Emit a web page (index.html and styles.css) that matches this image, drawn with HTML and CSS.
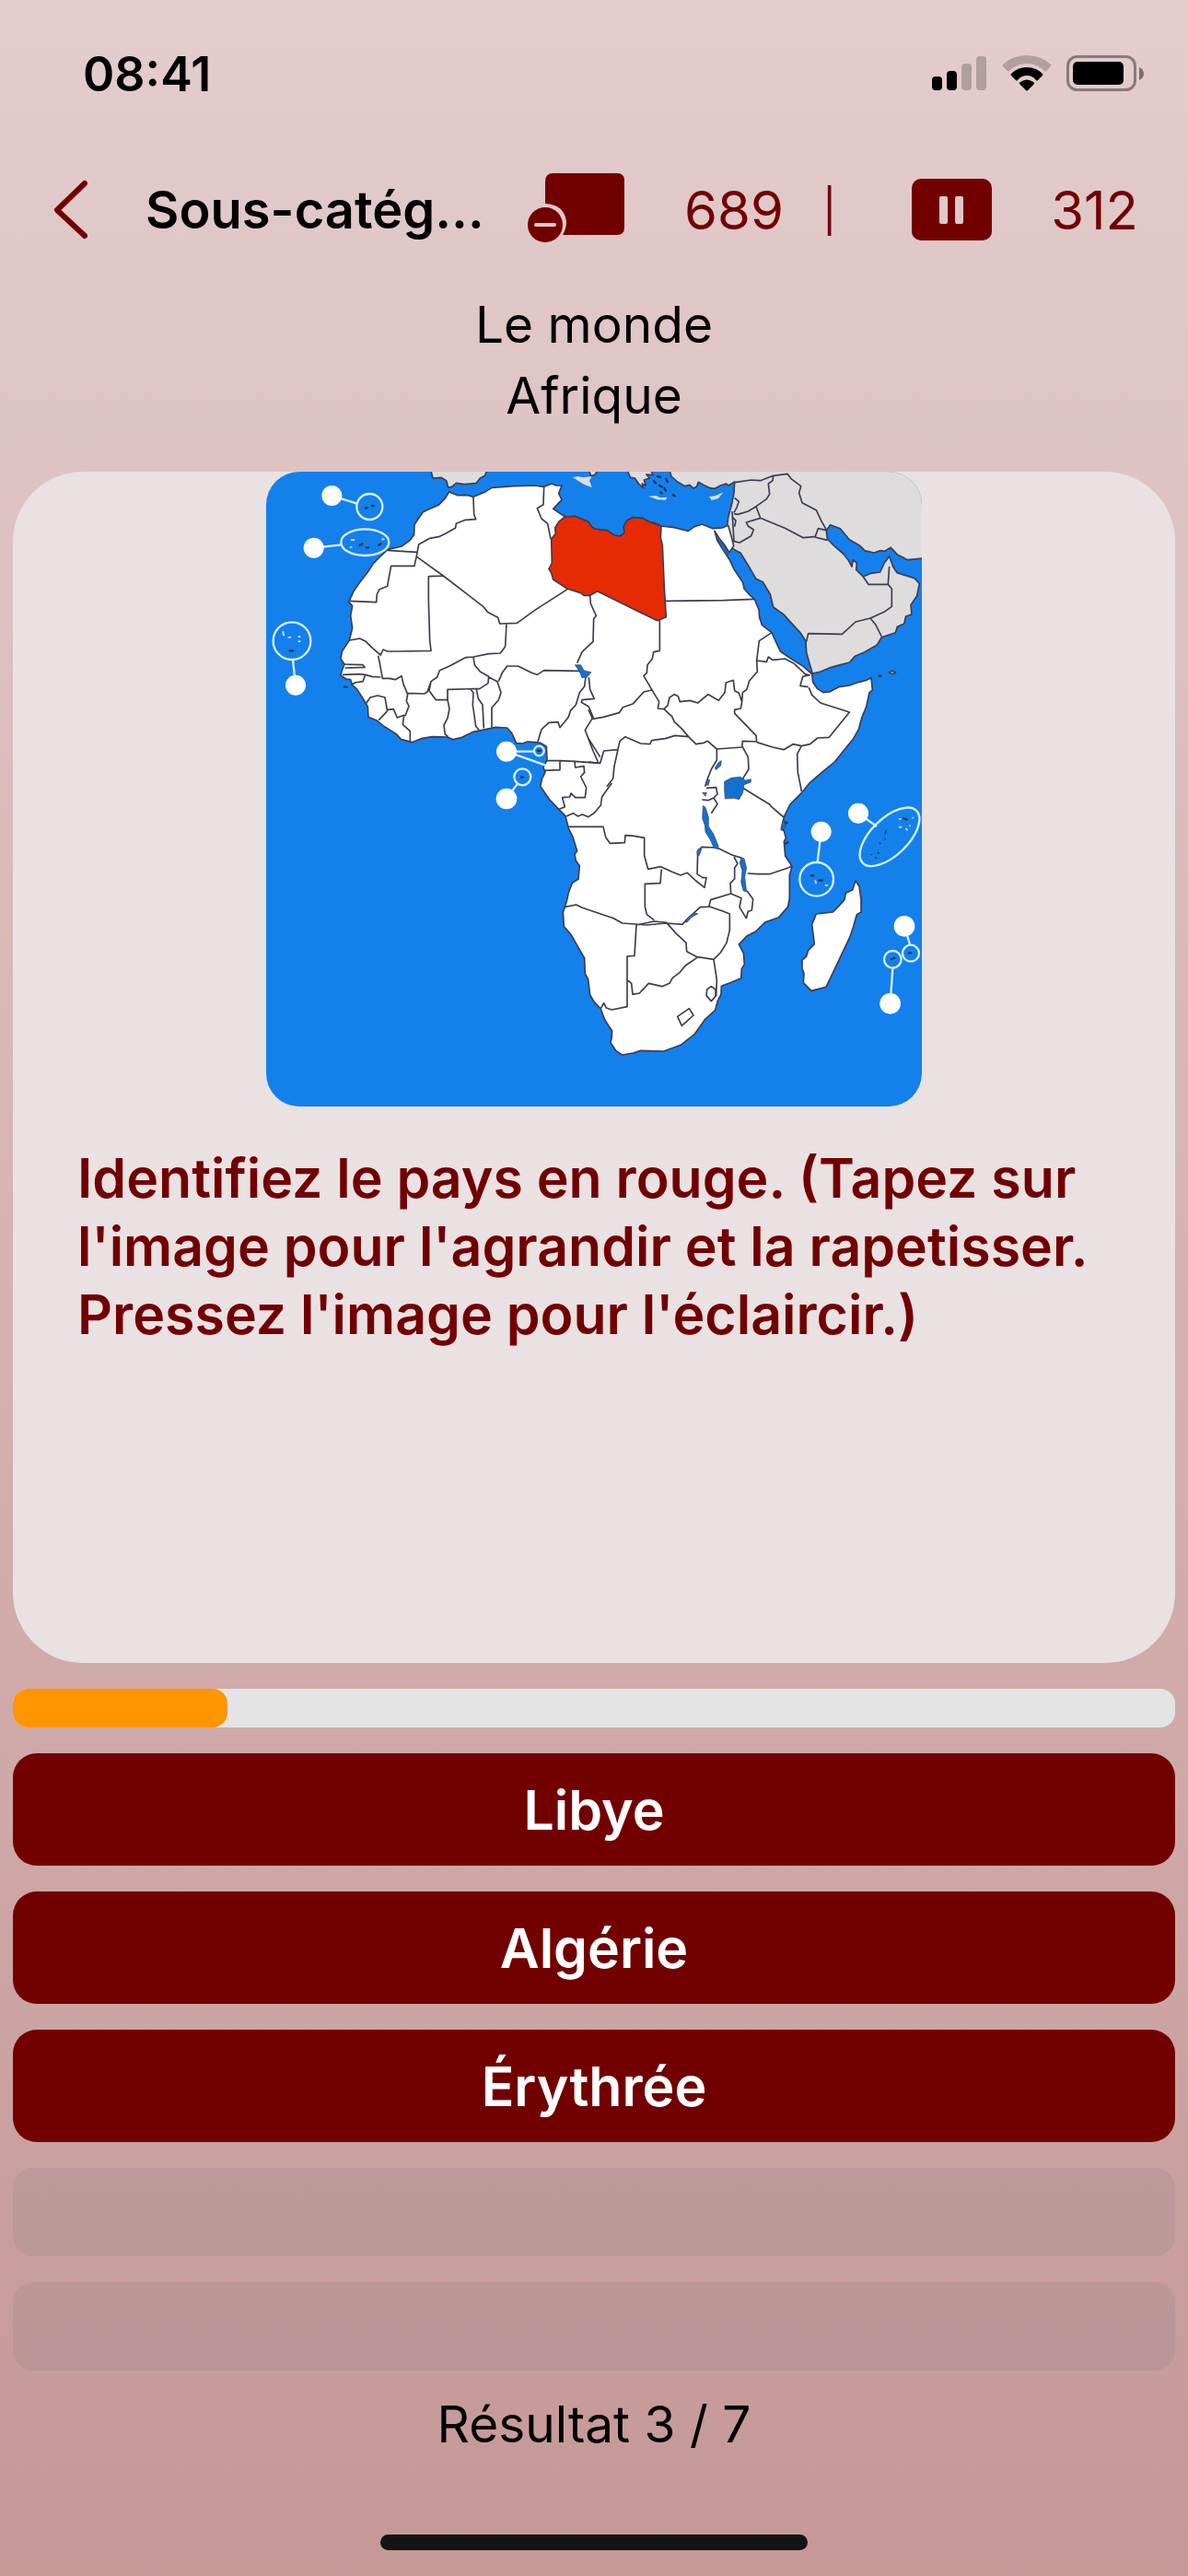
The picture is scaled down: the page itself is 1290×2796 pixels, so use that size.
FILE: index.html
```html
<!DOCTYPE html>
<html lang="fr">

<head>
    <meta charset="UTF-8">
    <meta name="viewport" content="width=device-width, initial-scale=1.0">
    <title>Quiz - Afrique</title>
    <link rel="stylesheet" href="styles.css">
</head>

<body>
    <div class="status-bar">
        <span class="time">08:41</span>
        <div class="status-icons">
            <svg width="60" height="40" viewBox="0 0 60 40">
                <rect x="0" y="23" width="11" height="15" rx="4"/>
                <rect x="16" y="17" width="11" height="21" rx="4"/>
                <rect class="dim" x="32" y="9" width="11" height="29" rx="4"/>
                <rect class="dim" x="48" y="1" width="11" height="37" rx="4"/>
            </svg>
            <svg width="54" height="40" viewBox="0 0 54 40">
                <path class="dim" d="M1 12Q0 11 1 10Q12 0 27 0Q42 0 53 10Q54 11 53 12L48 17Q47 18 46 17Q38 9 27 9Q16 9 8 17Q7 18 6 17Z"/>
                <path d="M10 22Q9 21 10 20Q17 13 27 13Q37 13 44 20Q45 21 44 22L39 27Q38 28 37 27Q33 22 27 22Q21 22 17 27Q16 28 15 27Z"/>
                <path d="M19 31Q18 30 20 29Q27 24 34 29Q36 30 35 31L28 38Q27 39 26 38Z"/>
            </svg>
            <svg width="84" height="40" viewBox="0 0 84 40">
                <rect class="battery-frame" x="1.5" y="1.5" width="73" height="36" rx="10"/>
                <rect x="7" y="7" width="55" height="25" rx="5"/>
                <path class="battery-tip" d="M79 13Q84 15 84 20Q84 25 79 27Z"/>
            </svg>
        </div>
    </div>

    <header class="nav-bar">
        <button class="icon-btn back-btn" aria-label="Retour">
            <svg width="40" height="66" viewBox="0 0 40 66"><path class="chevron" d="M34 4L4 33L34 61"/></svg>
        </button>
        <h1>Sous-catég…</h1>
        <button class="icon-btn remove-btn" aria-label="Retirer">
            <svg width="106" height="82" viewBox="0 0 106 82">
                <path class="fill" d="M28 1H97Q105 1 105 9V60Q105 68 97 68H38Q42 61 42 54Q40 35 19 34V10Q19 1 28 1Z"/>
                <circle class="fill" cx="19" cy="57" r="19"/>
                <path class="minus" d="M9 57H29"/>
            </svg>
        </button>
        <span class="counter">689</span>
        <span class="divider">|</span>
        <button class="icon-btn pause-btn" aria-label="Pause">
            <svg width="87" height="68" viewBox="0 0 87 68">
                <rect class="fill" width="87" height="67" rx="10"/>
                <rect class="pause-bar" x="30" y="19" width="9" height="30" rx="2"/>
                <rect class="pause-bar" x="47" y="19" width="9" height="30" rx="2"/>
            </svg>
        </button>
        <span class="counter score">312</span>
    </header>

    <div class="category">
        <div>Le monde</div>
        <div>Afrique</div>
    </div>

    <main class="quiz">
        <section class="question-card">
            <svg class="map" viewBox="15 21 2136 2067" role="img" aria-label="Carte de l'Afrique">
                <rect class="sea" x="15" y="21" width="2136" height="2067"/>

                <!-- Europe -->
                <path class="abroad" d="M550 10L558 42L586 40L602 50L608 72L620 70L634 58L660 62L700 58L712 42L728 34L736 10Z"/>
                <path class="abroad no-line" d="M1014 40L1030 36L1048 40L1076 36L1068 50L1076 72L1050 62Z"/>
                <path class="abroad" d="M1066 10H1100L1085 32L1072 34ZM1188 10L1202 40L1216 42L1230 62L1244 74L1240 60L1252 66L1246 48L1264 42L1254 30L1276 32L1264 10Z"/>
                <path class="abroad no-line" d="M1260 101L1284 99L1300 106L1322 104L1316 113L1290 112ZM1458 102L1478 100L1504 88L1488 108L1466 114Z"/>
                <path class="specks" d="M1278 52l6 6M1296 66l8 4M1290 36l10 3M1312 74l4 8M1340 96l6 4M1318 44l4 10M1300 88l4 3"/>

                <!-- Middle East -->
                <g transform="translate(1065 0)">
                    <path class="abroad" d="M262 10L270 36L290 54L314 68L330 64L342 75L352 70L358 55L374 64L396 74L412 76L430 66L448 60L456 66L476 54L474 90L466 130L456 165L452 195L462 235L466 268L484 280L495 285L520 325L546 370L568 380L592 420L602 462L635 485L662 515L690 545L708 572L710 610L722 652L730 678L756 672L790 658L820 650L850 642L868 622L900 608L940 585L955 560L1000 545L1006 526L1028 516L1034 492L1053 485L1050 455L1070 425L1078 385L1062 368L1005 350L992 330L980 296L964 318L950 348L920 352L895 363L872 340L874 318L862 308L858 330L846 308L830 288L800 262L778 240L775 212L788 194L820 206L850 242L884 262L900 278L930 285L952 278L965 280L985 268L1005 290L1040 308L1090 303V10Z"/>
                    <path class="border" d="M476 56L530 48L560 50L602 34L648 28L660 44L692 68L686 90L696 122L742 146L760 184L776 212L748 206L738 234L778 244M602 34L600 50L586 60L590 94L580 110L546 134L520 150L486 160L474 158M546 134L560 172L640 205L700 236L742 232M560 172L514 186L520 198L538 210L530 230L492 252L474 248L468 150M476 106L490 118L482 140L474 154M470 170L480 180L476 200M895 363L912 388H976L980 330M976 388L988 402V460L966 476L918 498L870 510L826 550L716 548L710 574M918 498L936 520L955 558"/>
                </g>

                <!-- Africa -->
                <path class="land" d="M612 85L598 108L576 130L548 142L526 152L508 178L498 194L497 226L484 244L456 264L410 275L378 306L364 320L346 348L318 384L300 410L284 445L296 458L290 490L296 530L286 570L262 606L258 630L270 648L262 668L258 685L276 696L290 698L296 716L310 728L328 756L346 786L348 820L374 830L396 848L440 876L454 892L490 902L520 890L556 884L605 885L625 893L650 887L690 868L720 862L762 853L800 855L815 872L830 905L850 906L866 900L890 902L908 904L928 916L930 960L918 984L924 1000L914 1020L908 1045L936 1086L968 1120L990 1142L1000 1182L1014 1210L1028 1256L1020 1266L1024 1288L1036 1304L1032 1348L1012 1360L1000 1392L994 1420L982 1456L985 1502L1008 1528L1032 1570L1052 1605L1054 1656L1064 1674L1070 1725L1084 1748L1105 1770L1118 1806L1142 1842L1140 1868L1137 1880L1155 1907L1175 1920L1210 1914L1235 1906L1310 1908L1365 1888L1410 1853L1445 1804L1478 1774L1486 1744L1497 1722L1498 1696L1530 1684L1562 1670L1564 1640L1573 1625L1570 1588L1555 1560L1582 1532L1610 1518L1640 1488L1685 1472L1715 1437L1720 1410V1335L1728 1306L1706 1272L1702 1225L1708 1214L1702 1190L1693 1186L1702 1145L1710 1128L1722 1104L1736 1090L1760 1066L1785 1035L1825 1000L1865 968L1900 925L1928 890L1945 860L1956 820L1970 786L1980 740L1990 732L1986 692L1970 700L1946 706L1915 717L1880 722L1850 738L1830 740L1810 727L1796 706L1793 680L1765 655L1725 630L1690 606L1678 580L1662 545L1630 520L1622 496L1620 470L1606 436L1592 424L1572 402L1568 382L1540 340L1526 310L1505 278L1484 244L1476 214L1490 236L1510 262L1524 284L1538 262L1530 230L1520 196L1500 204L1470 206L1435 192L1410 200L1390 214L1345 203L1302 198L1280 187L1262 184L1240 172L1210 170L1190 180L1180 200L1182 220L1168 231L1150 228L1125 212L1100 212L1085 207L1075 200L1064 184L1040 174L1020 166L1012 174L985 165L950 142L978 112L968 92L978 66L960 66L945 60L920 70L890 66L820 68L750 73L730 86L690 103L670 97L640 98L618 90Z"/>

                <path class="target" d="M988 168L1020 166L1040 174L1064 184L1075 200L1085 207L1125 212L1150 228L1168 231L1182 220L1180 200L1190 180L1210 170L1240 172L1262 184L1302 198L1300 236L1306 260L1312 400L1318 494L1290 506L1240 482L1094 410L1070 424L1050 424L1040 416L996 402L950 372L944 350L936 338L946 318L944 240L958 222L956 204L968 184Z"/>

                <!-- Northern borders -->
                <path class="border" d="M690 103L692 160L698 176L664 178L634 190L632 204L600 222L580 232L548 238L512 258L506 290L498 328H422L414 370L410 394L384 404L376 420L374 446L284 442M410 277L506 283M506 298L592 360L722 460L736 478L770 496L776 516L832 514L890 472L996 404M592 360L544 362V440L548 570L552 604L440 606L410 606L396 600L388 618L362 596L340 574L320 564L286 570M920 70L918 128L898 140L912 174L932 190L942 240M798 516L794 590L778 612L740 614L690 624L664 626L612 654L580 668L572 690L552 704L546 734L568 764H606V730L688 728M380 620L386 650L394 694L416 694L436 698L456 686L462 712L476 746L472 768L480 784L468 816M388 690L360 688L338 682L330 704L304 708L292 716M268 648L330 650L336 658L272 660M264 682L320 680L338 682M340 776L354 756L378 750L402 756L408 790L410 800L382 830M410 796L430 794L442 822L464 814L460 844L484 866L484 900M476 742L530 744L540 738L552 704M606 764L612 792L606 824L594 846L598 876L608 884M680 728L690 740L688 780L698 850L708 862M700 730L706 760L720 780L724 856M690 624L694 650L712 672L740 688L738 710L710 728L688 728M740 690L768 704L780 740L772 764L750 790V854M772 704L784 676L800 654L836 654L880 676L898 682L920 668L1040 670M1028 644L1044 608L1080 574L1082 500L1090 490L1072 450L1070 424M1056 690L1052 720L1036 740L1024 780L1006 800L1000 820L972 854L966 836L936 838L912 860L900 900M1066 690L1070 730L1084 760L1044 764L1042 772L1066 786L1080 820L1054 862L1080 930L1096 966M930 962H972V992L920 994M972 962L1020 964L1100 970M1020 964L1022 984L1050 980L1052 1000L1040 1014L1058 1050L1054 1082L1022 1082L1008 1068L1004 1080L980 1082L988 1112L970 1120"/>

                <!-- Eastern borders -->
                <g transform="translate(1065 0)">
                    <path class="border" d="M252 442L440 440L540 436M232 502V604L212 608L208 630L192 650L190 676L180 686L206 730L230 770L226 792L246 794L272 818L280 836L302 856L326 884L350 908L376 904L388 898L418 924L500 918L502 898L548 900M206 732L180 738L146 776L112 788L100 806L48 820L14 826L0 796M246 794L258 782L264 756L280 746L292 752L298 770L330 766L356 774L390 746L424 766L444 740L448 708L472 700L476 734L490 742L500 770L496 792L476 796L476 808L546 880L548 900M597 545L556 572L548 636L550 672L524 702L516 730L502 740L500 770M548 636L580 640L586 624L600 634L640 630L670 646L706 680L722 684M722 682L698 688L690 718L716 722M718 724L728 748L756 774L850 804L784 886L746 888L722 908L694 914L666 908L636 926L600 918L548 902M694 914L680 940L682 1000L692 1050M326 884L282 880L250 890L206 896L200 908L170 906L120 884L102 898L96 926L50 930L38 970L0 966M96 926L84 980L80 1020L60 1046M38 950L0 890M418 924L418 960L400 990L388 1020L380 1046M500 914L520 950L522 990L504 1018L500 1050M502 1050L550 1080L590 1104L596 1112L636 1146M692 1050L694 1062"/>
                </g>

                <!-- Southern borders -->
                <g transform="translate(1065 1035)">
                    <path class="border" d="M76 0L44 44L40 72L20 96L0 110L-20 102L-34 108L-50 98L-72 108M-65 142L48 142L56 176L70 196L118 194L120 170L148 172L182 178V236L194 280L236 272L270 288L300 300L322 292L350 318L378 340L384 308L372 308L354 296L356 230L368 208L418 210L468 234L500 244M238 280L234 326L184 328V402L190 428L214 446M-80 404L-40 396L-20 406L82 440L110 456L190 462L252 456L306 460L320 444L364 404L394 402L440 418L460 426V478L450 520L430 552L408 574L354 566L320 548L318 520L286 490L254 454L214 450L156 462L150 562L126 564V728L76 738L58 732L50 716L40 734M126 640L140 652L144 688L166 684L196 652L240 662L264 652L274 634L298 616L316 594L354 568M408 574L418 640L416 694M392 404L398 380L464 360L462 326L476 312V276L486 262L474 240M464 360L498 374L492 404L514 440L520 418L532 414L536 378L516 350M518 294L550 296L590 296L650 276L662 270M400 662L414 672L414 694L400 710L384 692L386 672ZM290 760L328 734L342 756L304 790ZM384 16L416 14L420 36L408 48L420 68L400 98M370 54L390 56L408 48"/>
                    <!-- Madagascar -->
                    <path class="land" d="M870 318L882 336L888 380V420L874 428L862 470L852 500L818 572L774 664L726 676L700 650L702 620L696 604V576L710 564L716 544L736 524L728 460L742 426L796 420L810 406L834 380L838 358L860 348Z"/>
                </g>

                <!-- Lakes -->
                <path class="lake" d="M1021 650L1040 650L1050 668L1074 674L1060 690L1044 692L1036 672Z"/>
                <path class="lake" d="M1508 1030L1530 1018L1560 1015L1576 1026L1594 1022L1594 1032L1572 1040L1568 1066L1556 1088L1538 1084L1510 1086L1508 1056Z"/>
                <path class="lake" d="M1477 985L1490 966L1498 962L1496 978L1480 992ZM1446 1040L1452 1024L1460 1024L1456 1042ZM1436 1066L1450 1066L1446 1078ZM1438 1108L1446 1114L1456 1146L1456 1176L1472 1200L1488 1240L1488 1250L1474 1246L1462 1220L1446 1194L1444 1172L1436 1150Z"/>
                <path class="lake" d="M1562 1278L1572 1280L1580 1312L1574 1340L1580 1388L1570 1386L1562 1358L1566 1320L1558 1296ZM1418 1258L1424 1248L1434 1248L1426 1270L1420 1272ZM1380 1488L1390 1472L1410 1458L1422 1460L1400 1472L1386 1488Z"/>
                <path class="lake" d="M1484 240L1506 262L1520 290L1506 280ZM1698 1158L1706 1156L1708 1176L1700 1188L1692 1180Z"/>

                <!-- Small islands -->
                <path class="abroad" d="M2044 674L2054 670L2066 674L2056 680Z"/>
                <path class="specks" d="M338 140l6 -2M360 132l5 0M320 260l8 -4M342 268l6 0M382 260l6 -4M270 722l8 0M92 604l10 0M900 930l8 0M846 1016l6 0M2012 686l5 0M1790 1336l8 0M1816 1352l10 0M2092 1150l10 4M2052 1608l10 -4M2108 1588l8 0M1706 1164l6 0M1708 1232l6 -4"/>
                <path class="specks thin" d="M2034 1190l-2 10M2030 1216l2 2M2014 1230l2 2M1986 1268l2 0M2008 1262l3 2M2000 1278l2 0"/>
                <path class="specks light" d="M293 243l8 0M290 267l3 0M394 241l4 0M70 543l2 10M88 560l6 0M121 558l4 0M121 574l4 0M1804 1354l2 6M1838 1368l4 0M2078 1152l3 0M2078 1178l5 0M2122 1148l0 0M2112 1174l0 0M2100 1184l3 3"/>

                <!-- Island markers -->
                <g class="rings">
                    <circle cx="352" cy="135" r="42"/>
                    <ellipse cx="337" cy="251" rx="78" ry="43"/>
                    <circle cx="99" cy="572" r="61"/>
                    <circle cx="904" cy="930" r="16"/>
                    <circle cx="850" cy="1015" r="27"/>
                    <circle cx="1808" cy="1348" r="55"/>
                    <ellipse cx="2046" cy="1210" rx="122" ry="60" transform="rotate(-44 2046 1210)"/>
                    <circle cx="2056" cy="1609" r="28"/>
                    <circle cx="2115" cy="1589" r="27"/>
                    <path d="M229 99L311 125M170 269L259 259M111 716L102 634M798 932H888M798 932L925 977M798 1086L834 1037M1823 1193L1811 1292M1944 1133L2004 1176M2094 1501L2112 1560M2048 1753L2056 1638"/>
                </g>
                <g class="dots">
                    <circle cx="229" cy="99" r="33"/>
                    <circle cx="170" cy="269" r="33"/>
                    <circle cx="111" cy="716" r="33"/>
                    <circle cx="798" cy="932" r="33"/>
                    <circle cx="798" cy="1086" r="34"/>
                    <circle cx="1823" cy="1193" r="33"/>
                    <circle cx="1944" cy="1133" r="33"/>
                    <circle cx="2094" cy="1501" r="34"/>
                    <circle cx="2048" cy="1753" r="34"/>
                </g>
            </svg>
            <p class="question">Identifiez le pays en rouge. (Tapez sur l'image pour l'agrandir et la rapetisser. Pressez l'image pour l'éclaircir.)</p>
        </section>

        <div class="timer" role="progressbar" aria-label="Temps" aria-valuenow="19" aria-valuemin="0" aria-valuemax="100">
            <div class="timer-fill" style="width: 18.5%"></div>
        </div>

        <button class="answer">Libye</button>
        <button class="answer">Algérie</button>
        <button class="answer">Érythrée</button>
        <button class="answer empty" aria-label="Réponse vide" disabled></button>
        <button class="answer empty" aria-label="Réponse vide" disabled></button>
    </main>

    <footer>
        <div class="result">Résultat 3 / 7</div>
        <div class="home-indicator"></div>
    </footer>
</body>

</html>
```
FILE: styles.css
```css
* {
    box-sizing: border-box;
}

body {
    margin: 0;
    min-height: 100vh;
    display: flex;
    flex-direction: column;
    font-family: Inter, "Liberation Sans", sans-serif;
    font-size: 55px;
    color: #000;
    background: linear-gradient(#e4cdcd, #c59896);
}

svg {
    display: block;
}

button {
    font-family: inherit;
    border: none;
    cursor: pointer;
}

.status-bar {
    display: flex;
    justify-content: space-between;
    align-items: center;
    height: 160px;
    padding: 0 48px 0 90px;
}

.time {
    font-size: 52px;
    font-weight: 600;
}

.status-icons {
    display: flex;
    gap: 16px;
}

.dim {
    opacity: 0.22;
}

.battery-frame {
    fill: none;
    stroke: #000;
    stroke-width: 3;
    opacity: 0.4;
}

.battery-tip {
    opacity: 0.45;
}

.nav-bar {
    display: flex;
    align-items: center;
    height: 136px;
    padding: 0 54px 0 58px;
    color: #720000;
}

.nav-bar h1 {
    flex: 1;
    margin: 0 0 0 60px;
    font-size: 56px;
    font-weight: 600;
    color: #000;
    white-space: nowrap;
}

.icon-btn {
    padding: 0;
    background: none;
}

.chevron {
    fill: none;
    stroke: #720000;
    stroke-width: 6;
    stroke-linecap: round;
    stroke-linejoin: round;
}

.fill {
    fill: #720000;
}

.minus {
    stroke: #e2c6c8;
    stroke-width: 4;
    stroke-linecap: round;
}

.pause-bar {
    fill: #e2c6c8;
}

.counter {
    margin-left: 64px;
    font-size: 58px;
}

.divider {
    margin: 0 82px 0 42px;
    font-size: 46px;
}

.category {
    padding: 18px 16px 44px;
    line-height: 77px;
    text-align: center;
}

.quiz {
    flex: 1;
    display: flex;
    flex-direction: column;
    gap: 28px;
    padding: 0 14px;
}

.question-card {
    flex: 1;
    padding-bottom: 40px;
    border-radius: 76px;
    background: #e9e1e2;
}

.map {
    width: 712px;
    max-width: 100%;
    margin: 0 auto;
    border-radius: 36px;
}

.sea {
    fill: #1480ec;
}

.land,
.abroad,
.target,
.border,
.lake {
    stroke: #3c3c50;
    stroke-width: 5;
    stroke-linejoin: round;
}

.land {
    fill: #fff;
}

.abroad {
    fill: #dedcdd;
}

.abroad.no-line {
    stroke: none;
}

.target {
    fill: #e62b04;
}

.border {
    fill: none;
}

.lake {
    fill: #1470d0;
    stroke-width: 2;
}

.specks {
    fill: none;
    stroke: #2c3450;
    stroke-width: 7;
    stroke-linecap: round;
}

.specks.thin {
    stroke-width: 4;
}

.specks.light {
    stroke: #b4dcff;
    stroke-width: 6;
}

.rings {
    fill: none;
    stroke: #d8eeff;
    stroke-width: 7;
}

.dots {
    fill: #fff;
}

.question {
    margin: 0;
    padding: 41px 70px 0;
    font-size: 59px;
    font-weight: 600;
    line-height: 74px;
    color: #720000;
}

.timer {
    height: 42px;
    border-radius: 16px;
    background: #e4e4e5;
    overflow: hidden;
}

.timer-fill {
    height: 100%;
    border-radius: 16px;
    background: #ff9500;
}

.answer {
    height: 122px;
    border-radius: 26px;
    font-size: 59px;
    font-weight: 600;
    color: #fff;
    background: #720000;
}

.answer.empty {
    height: 96px;
    border-radius: 22px;
    background: rgba(128, 128, 128, 0.2);
    cursor: default;
}

footer {
    display: flex;
    flex-direction: column;
    align-items: center;
    padding: 20px 0 28px;
}

.result {
    line-height: 77px;
}

.home-indicator {
    width: 36%;
    height: 17px;
    margin-top: 81px;
    border-radius: 9px;
    background: #141414;
}
```
